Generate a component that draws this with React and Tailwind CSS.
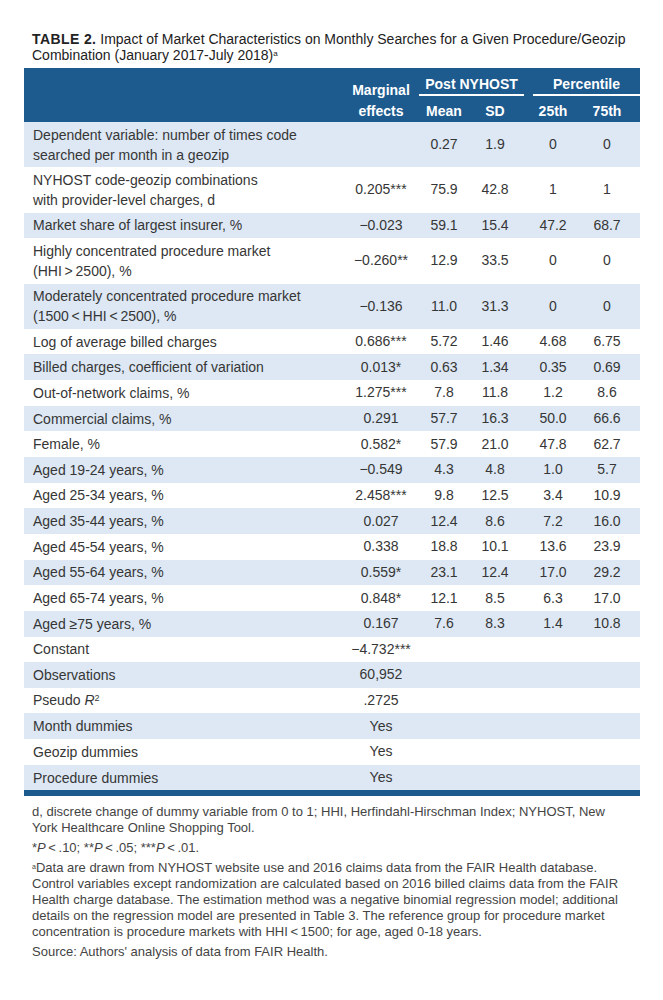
import React from "react";

const rows = [
  { label: ["Dependent variable: number of times code", "searched per month in a geozip"], v: ["", "0.27", "1.9", "0", "0"] },
  { label: ["NYHOST code-geozip combinations", "with provider-level charges, d"], v: ["0.205***", "75.9", "42.8", "1", "1"] },
  { label: ["Market share of largest insurer, %"], v: ["\u22120.023", "59.1", "15.4", "47.2", "68.7"] },
  { label: ["Highly concentrated procedure market", "(HHI\u2009>\u20092500), %"], v: ["\u22120.260**", "12.9", "33.5", "0", "0"] },
  { label: ["Moderately concentrated procedure market", "(1500\u2009<\u2009HHI\u2009<\u20092500), %"], v: ["\u22120.136", "11.0", "31.3", "0", "0"] },
  { label: ["Log of average billed charges"], v: ["0.686***", "5.72", "1.46", "4.68", "6.75"] },
  { label: ["Billed charges, coefficient of variation"], v: ["0.013*", "0.63", "1.34", "0.35", "0.69"] },
  { label: ["Out-of-network claims, %"], v: ["1.275***", "7.8", "11.8", "1.2", "8.6"] },
  { label: ["Commercial claims, %"], v: ["0.291", "57.7", "16.3", "50.0", "66.6"] },
  { label: ["Female, %"], v: ["0.582*", "57.9", "21.0", "47.8", "62.7"] },
  { label: ["Aged 19-24 years, %"], v: ["\u22120.549", "4.3", "4.8", "1.0", "5.7"] },
  { label: ["Aged 25-34 years, %"], v: ["2.458***", "9.8", "12.5", "3.4", "10.9"] },
  { label: ["Aged 35-44 years, %"], v: ["0.027", "12.4", "8.6", "7.2", "16.0"] },
  { label: ["Aged 45-54 years, %"], v: ["0.338", "18.8", "10.1", "13.6", "23.9"] },
  { label: ["Aged 55-64 years, %"], v: ["0.559*", "23.1", "12.4", "17.0", "29.2"] },
  { label: ["Aged 65-74 years, %"], v: ["0.848*", "12.1", "8.5", "6.3", "17.0"] },
  { label: ["Aged \u226575 years, %"], v: ["0.167", "7.6", "8.3", "1.4", "10.8"] },
  { label: ["Constant"], v: ["\u22124.732***", "", "", "", ""] },
  { label: ["Observations"], v: ["60,952", "", "", "", ""] },
  { label: ["Pseudo R2"], v: [".2725", "", "", "", ""] },
  { label: ["Month dummies"], v: ["Yes", "", "", "", ""] },
  { label: ["Geozip dummies"], v: ["Yes", "", "", "", ""] },
  { label: ["Procedure dummies"], v: ["Yes", "", "", "", ""] },
];

const cols = "grid grid-cols-[326px_62px_64px_38px_78px_30px]";

function Label({ lines }) {
  if (lines[0] === "Pseudo R2") {
    return (
      <span>
        Pseudo <i>R</i>
        <sup className="text-[9px]">2</sup>
      </span>
    );
  }
  return (
    <div className="flex flex-col leading-[20px]">
      {lines.map((l, i) => (
        <span key={i}>{l}</span>
      ))}
    </div>
  );
}

export default function App() {
  return (
    <div className="w-[663px] min-h-[1000px] bg-white pt-[31px] text-[#363636]" style={{ fontFamily: '"Liberation Sans", Arial, sans-serif' }}>
      <p className="pl-[32px] pr-[20px] text-[14px] leading-[16px] text-[#222]">
        <b className="tracking-[0.4px]">TABLE 2.</b> Impact of Market Characteristics on Monthly Searches for a Given Procedure/Geozip Combination (January 2017-July 2018)
        <sup className="text-[8px]">a</sup>
      </p>

      <div className="ml-[24px] mt-[5px] w-[616px]">
        <div className="h-[54px] bg-[#1d5b8f] text-white font-bold text-[14px] relative">
          <div className="flex pl-[395px] pt-[7px]">
            <span className="w-[105px] border-b-2 border-white pb-[1px] text-center leading-[18px]">Post NYHOST</span>
            <span className="ml-[9px] w-[107px] border-b-2 border-white pb-[1px] text-center leading-[18px]">Percentile</span>
          </div>
          <div className={`${cols} leading-[20px] pt-[5px]`}>
            <span />
            <span className="flex justify-center whitespace-nowrap">effects</span>
            <span className="flex justify-center">Mean</span>
            <span className="flex justify-center">SD</span>
            <span className="flex justify-center">25th</span>
            <span className="flex justify-center whitespace-nowrap">75th</span>
          </div>
          <span className="absolute left-[326px] w-[62px] top-[12px] flex justify-center leading-[20px]">Marginal</span>
        </div>

        {rows.map((r, i) => (
          <div
            key={i}
            className={`${cols} text-[14px] items-center ${r.label.length > 1 ? "h-[45.3px]" : "h-[25.65px]"} ${i % 2 === 0 ? "bg-[#dde8f4]" : "bg-white"}`}
          >
            <div className="pl-[9px] whitespace-nowrap">
              <Label lines={r.label} />
            </div>
            {r.v.map((x, j) => (
              <span key={j} className="flex justify-center whitespace-nowrap">
                {x}
              </span>
            ))}
          </div>
        ))}
        <div className="h-[6px] bg-[#1d5b8f]" />
      </div>

      <div className="px-[32px] pt-[8px] text-[13px] leading-[16px] text-[#444] space-y-[4px]">
        <p>d, discrete change of dummy variable from 0 to 1; HHI, Herfindahl-Hirschman Index; NYHOST, New York Healthcare Online Shopping Tool.</p>
        <p>
          *<i>P</i>{"\u2009<\u2009"}.10; **<i>P</i>{"\u2009<\u2009"}.05; ***<i>P</i>{"\u2009<\u2009"}.01.
        </p>
        <p>
          <sup className="text-[7px]">a</sup>Data are drawn from NYHOST website use and 2016 claims data from the FAIR Health database. Control variables except randomization are calculated based on 2016 billed claims data from the FAIR Health charge database. The estimation method was a negative binomial regression model; additional details on the regression model are presented in Table 3. The reference group for procedure market concentration is procedure markets with HHI{"\u2009<\u2009"}1500; for age, aged 0-18 years.
        </p>
        <p>Source: Authors' analysis of data from FAIR Health.</p>
      </div>
    </div>
  );
}
